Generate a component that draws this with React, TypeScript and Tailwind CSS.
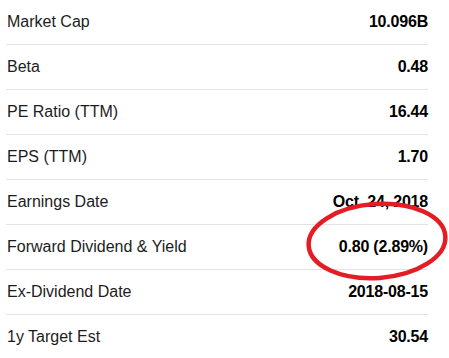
const rows: [string, string][] = [
  ['Market Cap', '10.096B'],
  ['Beta', '0.48'],
  ['PE Ratio (TTM)', '16.44'],
  ['EPS (TTM)', '1.70'],
  ['Earnings Date', 'Oct. 24, 2018'],
  ['Forward Dividend & Yield', '0.80 (2.89%)'],
  ['Ex-Dividend Date', '2018-08-15'],
  ['1y Target Est', '30.54'],
];

export default function App() {
  return (
    <div className="relative w-[449px] h-[358px] overflow-hidden bg-white font-['Liberation_Sans',Arial,sans-serif]">
      <div className="ml-[6px] w-[422px]">
        {rows.map(([label, value], i) => (
          <div
            key={label}
            className={`flex h-[45px] items-center justify-between pb-px ${
              i < rows.length - 1 ? 'border-b border-[#e3e3e3]' : ''
            }`}
          >
            <span className="pl-px text-[16px] leading-[18px] text-[#1c1c1c]">{label}</span>
            <span className="text-[16px] leading-[18px] font-bold text-black tracking-[-0.2px]">{value}</span>
          </div>
        ))}
      </div>

      {/* hand-drawn highlight */}
      <svg
        className="absolute left-[300px] top-[195px] pointer-events-none"
        width="149"
        height="95"
        viewBox="0 0 149 95"
      >
        <ellipse
          cx="77"
          cy="46"
          rx="68.5"
          ry="37"
          fill="none"
          stroke="#e41d25"
          strokeWidth="4.5"
          transform="rotate(-4 77 46)"
        />
      </svg>
    </div>
  );
}
